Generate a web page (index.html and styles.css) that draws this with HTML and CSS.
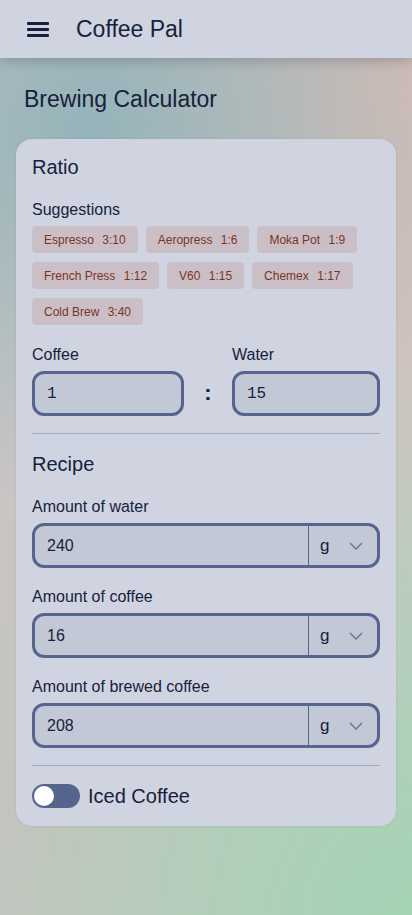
FILE: index.html
```html
<!DOCTYPE html>
<html lang="en">
  <head>
    <meta charset="UTF-8" />
    <meta name="viewport" content="width=device-width, initial-scale=1.0" />
    <title>Coffee Pal</title>
    <link rel="stylesheet" href="styles.css">
  </head>
  <body>
    <header class="top-bar">
      <button class="menu-button" aria-label="menu">
        <svg width="22" height="18" viewBox="0 0 22 18">
          <rect x="0" y="2" width="22" height="3" rx="1" />
          <rect x="0" y="8" width="22" height="3" rx="1" />
          <rect x="0" y="14" width="22" height="3" rx="1" />
        </svg>
      </button>
      <span class="app-title">Coffee Pal</span>
    </header>

    <main class="page">
      <h1 class="page-title">Brewing Calculator</h1>

      <section class="card">
        <h2 class="section-title">Ratio</h2>

        <div class="suggestions">
          <p class="label">Suggestions</p>
          <div class="chips">
            <button class="chip">Espresso <span>3:10</span></button>
            <button class="chip">Aeropress <span>1:6</span></button>
            <button class="chip">Moka Pot <span>1:9</span></button>
            <button class="chip">French Press <span>1:12</span></button>
            <button class="chip">V60 <span>1:15</span></button>
            <button class="chip">Chemex <span>1:17</span></button>
            <button class="chip">Cold Brew <span>3:40</span></button>
          </div>
        </div>

        <div class="ratio-row">
          <label class="field">
            <span class="label">Coffee</span>
            <input class="ratio-input" type="text" value="1" />
          </label>
          <span class="colon">:</span>
          <label class="field">
            <span class="label">Water</span>
            <input class="ratio-input" type="text" value="15" />
          </label>
        </div>

        <hr class="divider" />

        <h2 class="section-title">Recipe</h2>

        <div class="recipe">
          <div class="field">
            <span class="label">Amount of water</span>
            <div class="amount">
              <input type="text" value="240" />
              <div class="unit">g
                <svg width="14" height="8" viewBox="0 0 14 8"><path d="M1 1l6 6 6-6" /></svg>
              </div>
            </div>
          </div>
          <div class="field">
            <span class="label">Amount of coffee</span>
            <div class="amount">
              <input type="text" value="16" />
              <div class="unit">g
                <svg width="14" height="8" viewBox="0 0 14 8"><path d="M1 1l6 6 6-6" /></svg>
              </div>
            </div>
          </div>
          <div class="field">
            <span class="label">Amount of brewed coffee</span>
            <div class="amount">
              <input type="text" value="208" />
              <div class="unit">g
                <svg width="14" height="8" viewBox="0 0 14 8"><path d="M1 1l6 6 6-6" /></svg>
              </div>
            </div>
          </div>
        </div>

        <hr class="divider" />

        <label class="toggle-row">
          <span class="toggle"><span class="knob"></span></span>
          <span class="toggle-label">Iced Coffee</span>
        </label>
      </section>
    </main>
  </body>
</html>
```

FILE: styles.css
```css
:root {
  --ink: #17213d;
  --surface: #d0d4e0;
  --field: #c3c8d6;
  --border: #56658d;
  --chip: #cbbfc7;
  --chip-text: #7a3423;
  --line: #a3aac4;
}
body {
  margin: 0;
  min-height: 915px;
  font-family: "Liberation Sans", Arial, sans-serif;
  color: var(--ink);
  background:
    radial-gradient(circle at 22% 14%, rgba(148, 180, 186, 1) 0, rgba(148, 180, 186, 0) 45%),
    radial-gradient(circle at 95% 8%, rgba(214, 188, 180, 1) 0, rgba(214, 188, 180, 0) 55%),
    radial-gradient(circle at 100% 100%, rgba(164, 212, 180, 1) 0, rgba(164, 212, 180, 0) 60%),
    radial-gradient(circle at 10% 90%, rgba(208, 190, 194, 1) 0, rgba(208, 190, 194, 0) 60%),
    linear-gradient(#c9c6c6, #cac9c7);
}
.top-bar {
  height: 58px;
  display: flex;
  align-items: center;
  gap: 27px;
  padding: 0 16px;
  background: var(--surface);
  box-shadow: 0 4px 10px rgba(60, 60, 80, 0.25);
}
.menu-button {
  border: 0;
  background: none;
  padding: 0 0 0 11px;
  display: flex;
}
.menu-button svg {
  fill: var(--ink);
}
.app-title {
  font-size: 23px;
}
.page {
  padding: 0 16px 90px;
}
.page-title {
  margin: 0;
  padding: 28px 8px 26px;
  font-size: 23px;
  font-weight: normal;
}
.card {
  background: var(--surface);
  border-radius: 16px;
  padding: 16px 16px 18px;
  box-shadow: 0 0 2px rgba(80, 80, 100, 0.15);
}
.section-title {
  margin: 0;
  font-size: 20px;
  font-weight: normal;
  line-height: 24px;
}
.label {
  margin: 0;
  font-size: 16px;
  line-height: 20px;
}
.suggestions {
  margin-top: 21px;
}
.chips {
  display: flex;
  flex-wrap: wrap;
  gap: 9px 8px;
  margin-top: 6px;
}
.chip {
  height: 27px;
  border: 0;
  border-radius: 4px;
  padding: 0 12px;
  background: var(--chip);
  color: var(--chip-text);
  font-family: inherit;
  font-size: 12px;
}
.chip span {
  margin-left: 5px;
}
.ratio-row {
  display: grid;
  grid-template-columns: 152px 1fr 148px;
  align-items: end;
  margin-top: 20px;
}
.field {
  display: flex;
  flex-direction: column;
  gap: 6px;
}
.colon {
  height: 45px;
  line-height: 43px;
  text-align: center;
  font-size: 22px;
  font-weight: bold;
}
.ratio-input {
  box-sizing: border-box;
  height: 45px;
  width: 100%;
  border: 3px solid var(--border);
  border-radius: 12px;
  background: var(--field);
  padding: 0 12px;
  font-family: "Liberation Mono", monospace;
  font-size: 16px;
  color: var(--ink);
}
.divider {
  border: 0;
  border-top: 1px solid var(--line);
  margin: 17px 0 18px;
}
.recipe {
  display: flex;
  flex-direction: column;
  gap: 19px;
  margin-top: 21px;
}
.amount {
  box-sizing: border-box;
  height: 45px;
  display: grid;
  grid-template-columns: 1fr 69px;
  border: 3px solid var(--border);
  border-radius: 12px;
  background: var(--field);
  overflow: hidden;
}
.amount input {
  border: 0;
  background: none;
  padding: 0 12px;
  min-width: 0;
  font-family: inherit;
  font-size: 16px;
  color: var(--ink);
}
.unit {
  display: flex;
  align-items: center;
  justify-content: space-between;
  padding: 0 14px 0 11px;
  border-left: 1px solid var(--border);
  font-size: 17px;
}
.unit svg {
  fill: none;
  stroke: #6f7790;
  stroke-width: 1.5;
}
.toggle-row {
  display: flex;
  align-items: center;
  gap: 8px;
  margin-top: 18px;
}
.toggle {
  width: 48px;
  height: 24px;
  border-radius: 12px;
  background: var(--border);
  display: flex;
  align-items: center;
  padding: 0 2px;
  box-sizing: border-box;
}
.knob {
  width: 20px;
  height: 20px;
  border-radius: 50%;
  background: #ffffff;
}
.toggle-label {
  font-size: 20px;
}
```
